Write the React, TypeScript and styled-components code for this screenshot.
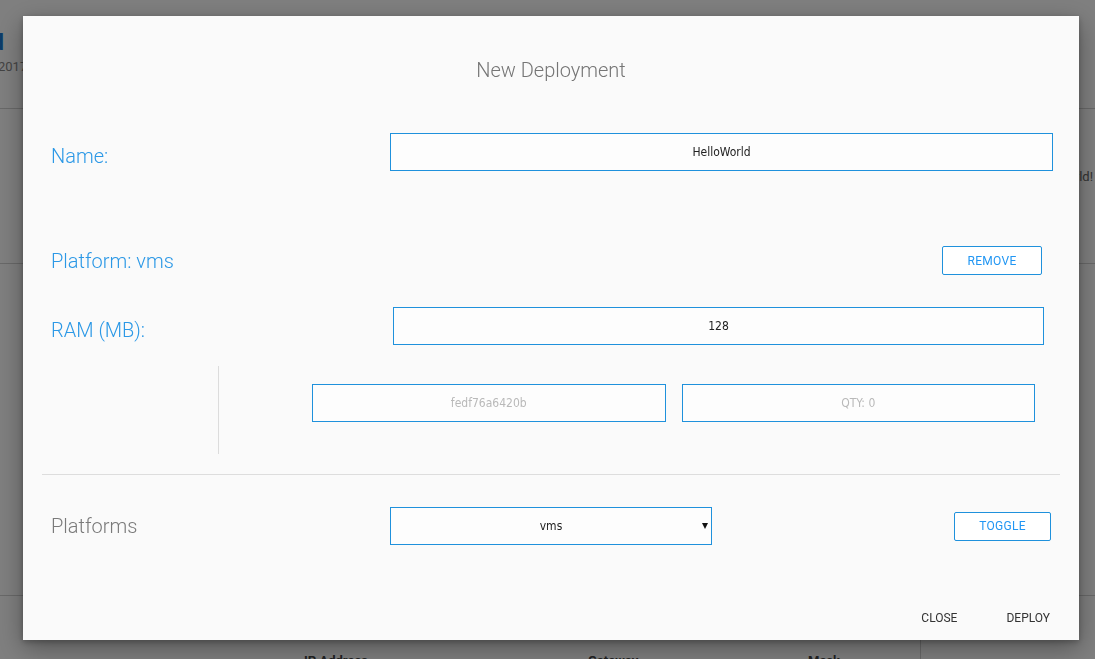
import React from "react";
import styled, { createGlobalStyle } from "styled-components";

const GlobalStyle = createGlobalStyle`
  html, body { margin: 0; padding: 0; }
  body {
    font-family: Roboto, "Noto Sans", "Liberation Sans", sans-serif;
    background: #ffffff;
    width: 1095px;
    height: 659px;
    overflow: hidden;
  }
  * { box-sizing: border-box; }
`;

const BLUE = "#2196f3";
const BORDER = "#1f91dc";

/* ---------- background page (under the overlay) ---------- */

const Page = styled.div`
  width: 1095px;
  height: 659px;
  display: flex;
  flex-direction: column;
  overflow: hidden;
`;

const TopBar = styled.header`
  height: 109px;
  border-bottom: 1px solid #d2d2d2;
  padding-top: 30px;
  display: flex;
  flex-direction: column;
`;

const Brand = styled.div`
  width: 4px;
  display: flex;
  justify-content: flex-end;
`;

const BrandTitle = styled.span`
  white-space: nowrap;
  color: #1877d2;
  font-size: 22px;
  font-weight: 700;
`;

const BrandDate = styled.span`
  margin-top: 4px;
  margin-left: -2px;
  white-space: nowrap;
  color: #888;
  font-size: 13px;
`;

const Band = styled.section<{ $h: number }>`
  height: ${(p) => p.$h}px;
  border-bottom: 1px solid #d2d2d2;
  display: flex;
  justify-content: flex-end;
  padding: 60px 2px 0 0;
`;

const Note = styled.span`
  color: #666;
  font-size: 13px;
`;

const TableHead = styled.div`
  flex: 1;
  display: grid;
  grid-template-columns: 304px 284px 220px 113px 1fr;
  align-items: end;
`;

const HeadCell = styled.span<{ $line?: boolean }>`
  font-size: 13px;
  font-weight: 700;
  color: #444;
  align-self: stretch;
  display: flex;
  align-items: flex-end;
  margin-bottom: -9px;
  border-right: ${(p) => (p.$line ? "1px solid #d2d2d2" : "none")};
`;

/* ---------- overlay + dialog ---------- */

const Overlay = styled.div`
  position: fixed;
  inset: 0;
  background: rgba(0, 0, 0, 0.5);
  padding: 16px 0 0 23px;
`;

const Dialog = styled.div`
  width: 1056px;
  height: 624px;
  background: #fafafa;
  box-shadow: 0 8px 24px rgba(0, 0, 0, 0.35), 0 2px 6px rgba(0, 0, 0, 0.25);
  display: flex;
  flex-direction: column;
`;

const Title = styled.h2`
  margin: 0;
  padding-top: 42px;
  text-align: center;
  font-size: 20px;
  line-height: 24px;
  font-weight: 300;
  color: #757575;
`;

const Body = styled.div`
  padding: 0 26px 0 28px;
  display: flex;
  flex-direction: column;
`;

const Row = styled.div<{ $cols: string; $mt: number; $pr?: number }>`
  display: grid;
  grid-template-columns: ${(p) => p.$cols};
  align-items: center;
  margin-top: ${(p) => p.$mt}px;
  padding-right: ${(p) => p.$pr ?? 0}px;
`;

const Label = styled.label<{ $muted?: boolean }>`
  font-size: 20px;
  font-weight: 300;
  color: ${(p) => (p.$muted ? "#7a7a7a" : "#2b98e6")};
  white-space: nowrap;
`;

const TextInput = styled.input<{ $gap?: boolean }>`
  height: 38px;
  width: 100%;
  margin: 0 0 ${(p) => (p.$gap ? 8 : 0)}px 0;
  border: 1px solid ${BORDER};
  border-radius: 0;
  background: #fdfdfd;
  text-align: center;
  font-family: "DejaVu Sans Condensed", "DejaVu Sans", sans-serif;
  font-size: 12px;
  color: #222;
  outline: none;
  &::placeholder { color: #b9b9b9; }
`;

const SubBlock = styled.div`
  margin: 13px 0 0 167px;
  border-left: 1px solid #dcdcdc;
  padding: 18px 18px 32px 93px;
  display: grid;
  grid-template-columns: 1fr 1fr;
  gap: 16px;
`;

const Divider = styled.hr`
  margin: 20px 19px 0 19px;
  border: none;
  border-top: 1px solid #dddddd;
  height: 0;
`;

const SelectWrap = styled.div`
  position: relative;
  height: 38px;
  &::after {
    content: "";
    position: absolute;
    right: 4px;
    top: 16px;
    border-left: 3px solid transparent;
    border-right: 3px solid transparent;
    border-top: 6px solid #111;
    pointer-events: none;
  }
`;

const Select = styled.select`
  appearance: none;
  -webkit-appearance: none;
  height: 38px;
  width: 100%;
  border: 1px solid ${BORDER};
  border-radius: 0;
  background: #fdfdfd;
  text-align: center;
  text-align-last: center;
  font-family: "DejaVu Sans Condensed", "DejaVu Sans", sans-serif;
  font-size: 12px;
  color: #222;
  outline: none;
`;

const OutlineButton = styled.button`
  height: 29px;
  border: 1px solid ${BORDER};
  border-radius: 2px;
  background: #fff;
  color: ${BLUE};
  font-family: Roboto, "Noto Sans", sans-serif;
  font-size: 12px;
  letter-spacing: 0.3px;
  text-transform: uppercase;
  cursor: pointer;
`;

const Footer = styled.div`
  margin-top: auto;
  padding: 0 13px 4px 0;
  display: flex;
  justify-content: flex-end;
  gap: 17px;
`;

const FlatButton = styled.button`
  height: 36px;
  padding: 0 16px;
  border: none;
  background: transparent;
  color: #333;
  font-family: Roboto, "Noto Sans", sans-serif;
  font-size: 12px;
  text-transform: uppercase;
  cursor: pointer;
`;

export default function App() {
  return (
    <>
      <GlobalStyle />
      <Page>
        <TopBar>
          <Brand>
            <BrandTitle>HelloWorld</BrandTitle>
          </Brand>
          <BrandDate>2017-12-04 10:42</BrandDate>
        </TopBar>
        <Band $h={155}>
          <Note>Hello World!</Note>
        </Band>
        <Band $h={332} />
        <TableHead>
          <HeadCell />
          <HeadCell>IP Address</HeadCell>
          <HeadCell>Gateway</HeadCell>
          <HeadCell $line>Mask</HeadCell>
          <HeadCell />
        </TableHead>
      </Page>

      <Overlay>
        <Dialog role="dialog" aria-label="New Deployment">
          <Title>New Deployment</Title>
          <Body>
            <Row $cols="339px 1fr" $mt={51}>
              <Label>Name:</Label>
              <TextInput $gap defaultValue="HelloWorld" />
            </Row>

            <Row $cols="1fr 100px" $mt={67} $pr={11}>
              <Label>Platform: vms</Label>
              <OutlineButton>Remove</OutlineButton>
            </Row>

            <Row $cols="342px 1fr" $mt={32} $pr={9}>
              <Label>RAM (MB):</Label>
              <TextInput $gap defaultValue="128" />
            </Row>

            <SubBlock>
              <TextInput placeholder="fedf76a6420b" />
              <TextInput placeholder="QTY: 0" />
            </SubBlock>
          </Body>

          <Divider />

          <Body>
            <Row $cols="339px 322px 1fr 97px" $mt={32} $pr={2}>
              <Label $muted>Platforms</Label>
              <SelectWrap>
                <Select defaultValue="vms">
                  <option value="vms">vms</option>
                </Select>
              </SelectWrap>
              <span />
              <OutlineButton>Toggle</OutlineButton>
            </Row>
          </Body>

          <Footer>
            <FlatButton>Close</FlatButton>
            <FlatButton>Deploy</FlatButton>
          </Footer>
        </Dialog>
      </Overlay>
    </>
  );
}
